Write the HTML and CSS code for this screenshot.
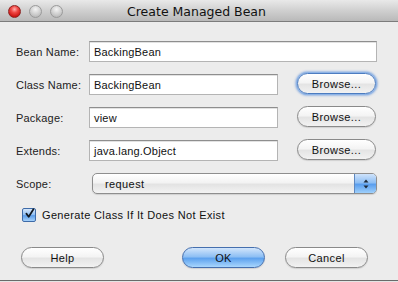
FILE: index.html
```html
<!DOCTYPE html>
<html>
<head>
<meta charset="utf-8">
<link rel="stylesheet" href="styles.css">
</head>
<body>
<div class="window">
  <div class="titlebar">
    <div class="lights">
      <span class="light red"></span>
      <span class="light gray"></span>
      <span class="light gray"></span>
    </div>
    <div class="title">Create Managed Bean</div>
  </div>
  <div class="content">
    <div class="form">
      <label class="lbl">Bean Name:</label>
      <div class="input wide">BackingBean</div>

      <label class="lbl">Class Name:</label>
      <div class="input">BackingBean</div>
      <button class="btn browse focused">Browse...</button>

      <label class="lbl">Package:</label>
      <div class="input">view</div>
      <button class="btn browse">Browse...</button>

      <label class="lbl">Extends:</label>
      <div class="input">java.lang.Object</div>
      <button class="btn browse">Browse...</button>

      <label class="lbl">Scope:</label>
      <div class="select">
        <span class="sel-text">request</span>
        <span class="stepper">
          <svg width="8" height="12" viewBox="0 0 8 12"><path d="M4 1.5 L6.5 4.5 L1.5 4.5 Z" fill="#1d2a3a"/><path d="M4 10.5 L6.5 7.5 L1.5 7.5 Z" fill="#1d2a3a"/></svg>
        </span>
      </div>
    </div>
    <div class="check-row">
      <span class="checkbox">
        <svg width="14" height="14" viewBox="0 0 14 14"><path d="M3 6.5 L6 10.5 L12 1" fill="none" stroke="#101820" stroke-width="2.2" stroke-linecap="round" stroke-linejoin="round"/></svg>
      </span>
      <span class="check-label">Generate Class If It Does Not Exist</span>
    </div>
    <div class="buttons">
      <button class="btn big">Help</button>
      <div class="spacer"></div>
      <button class="btn big default">OK</button>
      <button class="btn big">Cancel</button>
    </div>
  </div>
</div>
</body>
</html>
```
FILE: styles.css
```css
html, body {
  margin: 0;
  padding: 0;
}
body {
  width: 398px;
  height: 282px;
  background: #e4e4e4;
  font-family: "Liberation Sans", Arial, sans-serif;
  overflow: hidden;
}
.window {
  box-sizing: border-box;
  height: 281px;
  background: #ececec;
  border-bottom: 1px solid #6a6a6a;
  display: flex;
  flex-direction: column;
}
.titlebar {
  position: relative;
  height: 21px;
  border-bottom: 1px solid #7c7c7c;
  background: linear-gradient(#e9e9e9, #d2d2d2 45%, #b9b9b9);
  display: flex;
  align-items: center;
  justify-content: center;
}
.lights {
  position: absolute;
  left: 8px;
  top: 5px;
  display: flex;
  gap: 8px;
}
.light {
  width: 13px;
  height: 13px;
  border-radius: 50%;
  box-sizing: border-box;
}
.light.red {
  background: radial-gradient(circle at 50% 30%, #ffb0ae 0%, #f04a46 35%, #c8100d 80%, #9e0806 100%);
  border: 1px solid #8e2422;
}
.light.gray {
  background: radial-gradient(circle at 50% 30%, #f4f4f4 0%, #d4d4d4 45%, #b4b4b4 90%);
  border: 1px solid #9a9a9a;
}
.title {
  font-family: "DejaVu Sans", sans-serif;
  font-size: 12.5px;
  color: #111;
  margin-left: -5px;
  margin-top: 1px;
}
.content {
  flex: 1;
  display: flex;
  flex-direction: column;
}
.form {
  display: grid;
  grid-template-columns: 73px 189px 19px 80px;
  grid-auto-rows: 21px;
  row-gap: 12px;
  padding: 19px 21px 0 16px;
  align-items: center;
}
.lbl {
  grid-column: 1;
  font-size: 11px;
  color: #222;
  letter-spacing: 0.2px;
}
.input {
  grid-column: 2;
  box-sizing: border-box;
  height: 21px;
  background: #fff;
  border: 1px solid #b4b4b4;
  border-top-color: #8e8e8e;
  box-shadow: inset 0 1px 0 #e2e2e2;
  font-size: 11px;
  color: #111;
  padding: 4px 0 0 4px;
  letter-spacing: 0.2px;
}
.input.wide {
  grid-column: 2 / 5;
}
.btn {
  font-family: "Liberation Sans", Arial, sans-serif;
  font-size: 11px;
  color: #111;
  box-sizing: border-box;
  height: 21px;
  border-radius: 11px;
  border: 1px solid #8a8a8a;
  background: linear-gradient(#ffffff, #f4f4f4 45%, #e4e4e4 55%, #f2f2f2 100%);
  box-shadow: 0 1px 1px rgba(0,0,0,0.12);
  padding: 0;
  letter-spacing: 0.4px;
}
.browse {
  grid-column: 4;
  width: 79px;
  margin-top: -2px;
}
.browse.focused {
  border-color: #4c7cc0;
  box-shadow: 0 0 0 1px #8db3e6, 0 0 2px 2px rgba(110,155,220,0.6);
}
.select {
  grid-column: 2 / 5;
  margin-left: 3px;
  box-sizing: border-box;
  height: 21px;
  border-radius: 5px;
  border: 1px solid #8e8e8e;
  background: linear-gradient(#ffffff, #f3f3f3 45%, #e3e3e3 55%, #f3f3f3);
  box-shadow: 0 1px 1px rgba(0,0,0,0.12);
  display: flex;
  align-items: center;
  overflow: hidden;
}
.sel-text {
  flex: 1;
  font-size: 11px;
  color: #111;
  padding-left: 12px;
  letter-spacing: 0.4px;
}
.stepper {
  width: 21px;
  height: 100%;
  background: linear-gradient(#cfe3fb, #8fbff4 45%, #5a9eee 55%, #9fd0fb);
  border-left: 1px solid #5e88c0;
  display: flex;
  align-items: center;
  justify-content: center;
}
.check-row {
  display: flex;
  align-items: center;
  padding: 14px 0 0 22px;
  gap: 6px;
}
.checkbox {
  box-sizing: border-box;
  width: 14px;
  height: 14px;
  border: 1px solid #3e6ba8;
  border-radius: 2px;
  background: linear-gradient(#d6e7fb, #8dbdf2 50%, #5c9de8 55%, #a6d2fb);
  display: flex;
  align-items: center;
  justify-content: center;
}
.checkbox svg {
  margin-top: -3px;
  margin-left: 1px;
}
.check-label {
  font-size: 11px;
  color: #111;
  letter-spacing: 0.35px;
}
.buttons {
  display: flex;
  align-items: center;
  padding: 25px 30px 0 21px;
  gap: 20px;
}
.spacer {
  flex: 1;
}
.big {
  width: 83px;
  height: 21px;
}
.default {
  border-color: #456fae;
  background: linear-gradient(#d2e5fb, #8fc0f4 45%, #5ea2ee 55%, #a8d6fd);
}
```
